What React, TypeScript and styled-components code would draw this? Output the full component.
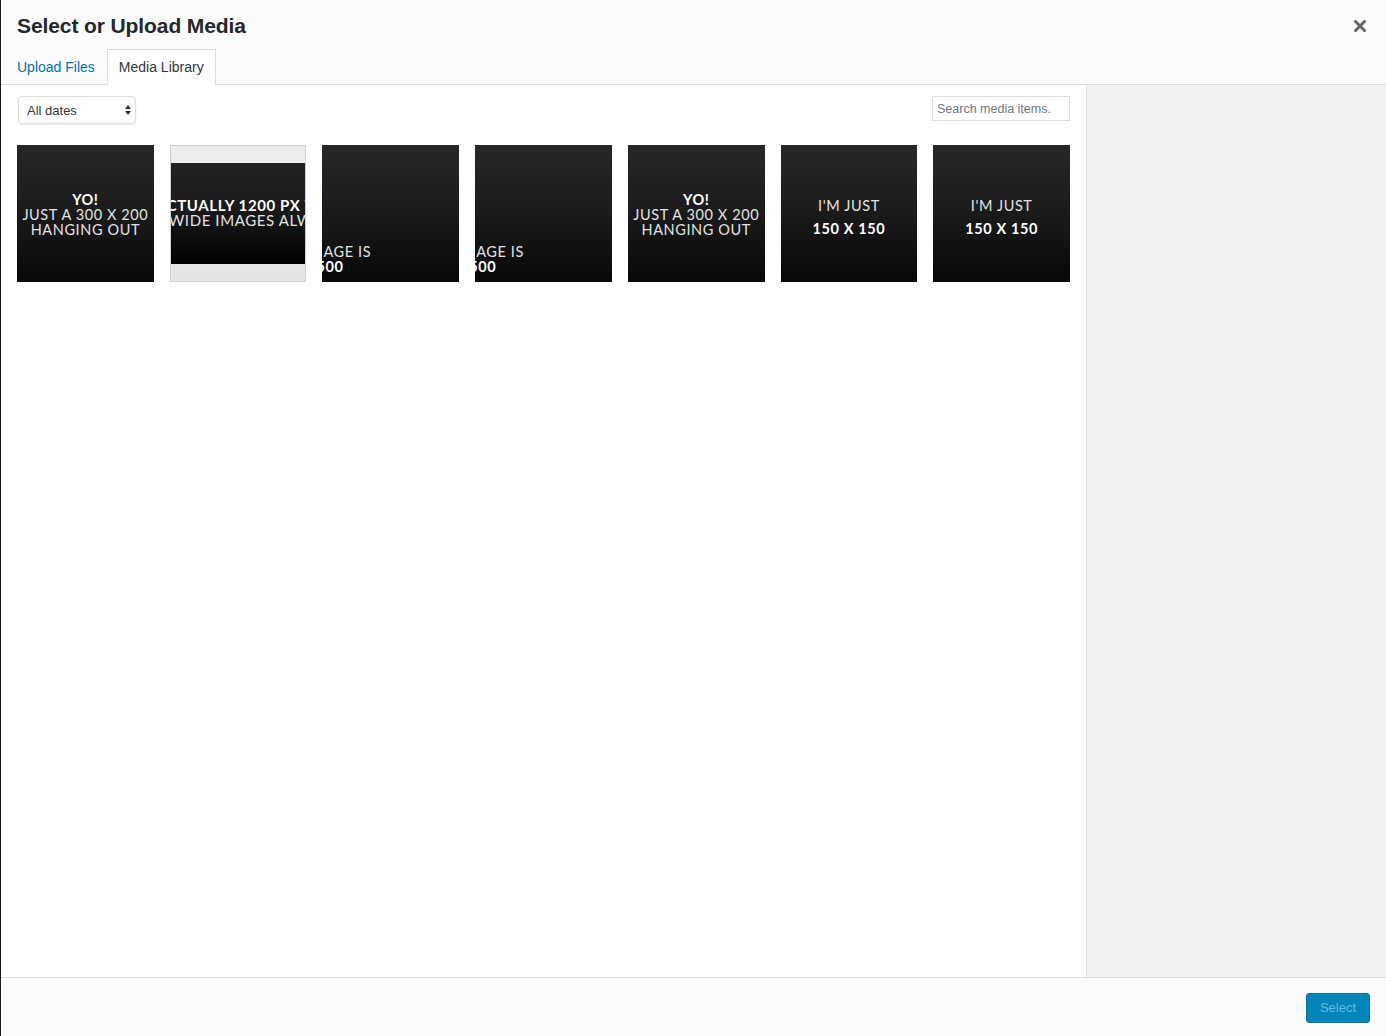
import React from "react";
import styled, { createGlobalStyle, css } from "styled-components";

const GlobalStyle = createGlobalStyle`
  html, body {
    margin: 0;
    padding: 0;
    background: #fff;
  }
  * {
    box-sizing: border-box;
  }
  body {
    font-family: "Liberation Sans", Arial, sans-serif;
    color: #23282d;
  }
`;

const Frame = styled.div`
  height: 100vh;
  display: flex;
  flex-direction: column;
  border-left: 1px solid #1c1c1c;
  background: #fff;
`;

const Header = styled.div`
  background: #fcfcfc;
  border-bottom: 1px solid #ddd;
  display: flex;
  flex-direction: column;
`;

const TitleRow = styled.div`
  height: 49px;
  display: flex;
  align-items: center;
  justify-content: space-between;
  padding: 2px 19px 0 16px;
`;

const Title = styled.h1`
  margin: 0;
  font-size: 21px;
  font-weight: 700;
  color: #23282d;
  letter-spacing: -0.1px;
`;

const CloseButton = styled.button`
  border: 0;
  background: none;
  padding: 0;
  width: 14px;
  height: 14px;
  display: flex;
  align-items: center;
  justify-content: center;
  cursor: pointer;
`;

const Tabs = styled.div`
  display: flex;
  padding-left: 4px;
  margin-bottom: -1px;
`;

const Tab = styled.button<{ $active?: boolean }>`
  font-family: inherit;
  font-size: 14px;
  height: 36px;
  padding: 0 11px 2px;
  background: transparent;
  border: 1px solid transparent;
  border-bottom: 0;
  color: #0073aa;
  cursor: pointer;
  ${(p) =>
    p.$active &&
    css`
      background: #fff;
      border-color: #ddd;
      color: #32373c;
    `}
`;

const Body = styled.div`
  flex: 1;
  display: flex;
  min-height: 0;
`;

const Browser = styled.div`
  flex: 1;
  min-width: 0;
  padding: 11px 16px 0;
`;

const Toolbar = styled.div`
  display: flex;
  justify-content: space-between;
  align-items: flex-start;
  padding-left: 1px;
`;

const DateSelect = styled.div`
  width: 118px;
  height: 28px;
  border: 1px solid #ddd;
  border-radius: 4px;
  box-shadow: 0 1px 2px rgba(0, 0, 0, 0.07);
  display: flex;
  align-items: center;
  justify-content: space-between;
  padding: 0 3px 0 8px;
  font-size: 13px;
  color: #32373c;
  background: #fff;
`;

const SearchBox = styled.div`
  width: 138px;
  height: 25px;
  border: 1px solid #ddd;
  display: flex;
  align-items: center;
  padding-left: 4px;
  font-size: 12.5px;
  color: #72777c;
  background: #fff;
`;

const Grid = styled.div`
  display: grid;
  grid-template-columns: repeat(7, 1fr);
  gap: 16px;
  margin-top: 21px;
`;

const Thumb = styled.div<{ $light?: boolean }>`
  height: 137px;
  overflow: hidden;
  display: flex;
  flex-direction: column;
  font-family: Lato, "Open Sans", sans-serif;
  text-transform: uppercase;
  color: #e6e6e6;
  background: linear-gradient(#272727, #1c1c1c 45%, #080808);
  ${(p) =>
    p.$light &&
    css`
      border: 1px solid #d0d0d0;
      background: linear-gradient(#ededed, #e4e4e4);
      padding: 17px 0;
    `}
`;

const Band = styled.div`
  flex: 1;
  background: linear-gradient(#222 0%, #1b1b1b 45%, #000 100%);
  display: flex;
  flex-direction: column;
  justify-content: center;
  padding-bottom: 2px;
  white-space: nowrap;
  overflow: hidden;
`;

const Center = styled.div<{ $gap?: number }>`
  flex: 1;
  display: flex;
  flex-direction: column;
  align-items: center;
  justify-content: center;
  gap: ${(p) => p.$gap ?? 0}px;
  padding-top: ${(p) => (p.$gap ? 6 : 2)}px;
`;

const Bottom = styled.div`
  flex: 1;
  display: flex;
  flex-direction: column;
  justify-content: flex-end;
  padding-bottom: 8px;
  white-space: nowrap;
`;

const Line = styled.div<{ $bold?: boolean; $shift?: number; $size?: number }>`
  font-size: ${(p) => p.$size ?? 14.5}px;
  line-height: 15px;
  letter-spacing: 0.6px;
  font-weight: ${(p) => (p.$bold ? 700 : 400)};
  color: ${(p) => (p.$bold ? "#fff" : "#e2e2e2")};
  margin-left: ${(p) => p.$shift ?? 0}px;
`;

const Sidebar = styled.div`
  width: 300px;
  flex-shrink: 0;
  background: #f3f3f3;
  border-left: 1px solid #ddd;
`;

const Footer = styled.div`
  height: 59px;
  background: #fcfcfc;
  border-top: 1px solid #ddd;
  display: flex;
  justify-content: flex-end;
  align-items: center;
  padding: 0 16px 0 0;
`;

const SelectButton = styled.button`
  font-family: inherit;
  width: 64px;
  height: 30px;
  background: #0085ba;
  border: 1px solid #0079ab;
  border-radius: 3px;
  color: #66bfe0;
  font-size: 13px;
  margin-top: 1px;
`;

function YoThumb() {
  return (
    <Thumb>
      <Center>
        <Line $bold>YO!</Line>
        <Line>Just a 300 x 200</Line>
        <Line>Hanging out</Line>
      </Center>
    </Thumb>
  );
}

function ImageIsThumb() {
  return (
    <Thumb>
      <Bottom>
        <Line $shift={1}>age is</Line>
        <Line $bold $shift={-6}>500</Line>
      </Bottom>
    </Thumb>
  );
}

function JustThumb() {
  return (
    <Thumb>
      <Center $gap={8}>
        <Line>I'm just</Line>
        <Line $bold>150 x 150</Line>
      </Center>
    </Thumb>
  );
}

export default function App() {
  return (
    <>
      <GlobalStyle />
      <Frame>
        <Header>
          <TitleRow>
            <Title>Select or Upload Media</Title>
            <CloseButton aria-label="Close">
              <svg width="12" height="12" viewBox="0 0 12 12">
                <path
                  d="M1.5 1.5 L10.5 10.5 M10.5 1.5 L1.5 10.5"
                  stroke="#666"
                  strokeWidth="3"
                  strokeLinecap="square"
                />
              </svg>
            </CloseButton>
          </TitleRow>
          <Tabs>
            <Tab>Upload Files</Tab>
            <Tab $active>Media Library</Tab>
          </Tabs>
        </Header>
        <Body>
          <Browser>
            <Toolbar>
              <DateSelect>
                All dates
                <svg width="8" height="12" viewBox="0 0 8 12">
                  <path d="M4 1 L7 5 H1 Z M4 11 L7 7 H1 Z" fill="#333" />
                </svg>
              </DateSelect>
              <SearchBox>Search media items.</SearchBox>
            </Toolbar>
            <Grid>
              <YoThumb />
              <Thumb $light>
                <Band>
                  <Line $bold $size={15} $shift={-4}>ctually 1200 px w</Line>
                  <Line $size={15} $shift={-2}>wide images alw</Line>
                </Band>
              </Thumb>
              <ImageIsThumb />
              <ImageIsThumb />
              <YoThumb />
              <JustThumb />
              <JustThumb />
            </Grid>
          </Browser>
          <Sidebar />
        </Body>
        <Footer>
          <SelectButton>Select</SelectButton>
        </Footer>
      </Frame>
    </>
  );
}
